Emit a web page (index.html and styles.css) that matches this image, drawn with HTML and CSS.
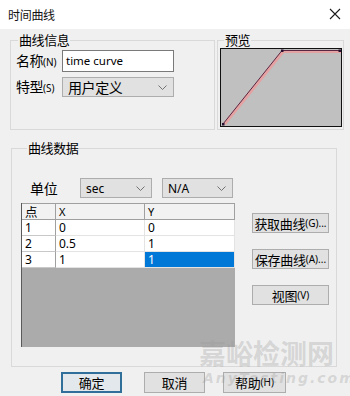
FILE: index.html
```html
<!DOCTYPE html>
<html>
<head>
<meta charset="utf-8">
<link rel="stylesheet" href="styles.css">
</head>
<body>
<div class="window">
  <div class="titlebar">
    <span class="title">时间曲线</span>
    <svg class="close" width="12" height="12" viewBox="0 0 12 12"><path d="M1 1 L11 11 M11 1 L1 11" stroke="#1a1a1a" stroke-width="1.1" fill="none"/></svg>
  </div>
  <div class="content">
    <div class="toprow">
      <fieldset class="group info">
        <legend>曲线信息</legend>
        <div class="field">
          <span class="lbl">名称<small>(N)</small></span>
          <div class="input">time curve</div>
        </div>
        <div class="field">
          <span class="lbl">特型<small>(S)</small></span>
          <div class="select wide"><span class="cjk">用户定义</span>
            <svg class="chev" width="9" height="5" viewBox="0 0 9 5"><path d="M0.5 0.5 L4.5 4.5 L8.5 0.5" stroke="#666" stroke-width="0.9" fill="none"/></svg>
          </div>
        </div>
      </fieldset>
      <fieldset class="group preview">
        <legend>预览</legend>
        <div class="canvas">
          <svg width="120" height="77" viewBox="0 0 120 77">
            <polyline points="3.5,75 62,2.5 120,2.5" stroke="#e5a2a2" stroke-width="3.2" fill="none"/>
            <polyline points="2,75 61,1.5 120,1.5" stroke="#4a1838" stroke-width="0.9" fill="none"/>
            <rect x="1" y="74" width="2.5" height="2.5" fill="#2a1030"/>
            <rect x="60" y="0.5" width="2.5" height="2.5" fill="#2a1030"/>
            <rect x="117.5" y="0.5" width="2.5" height="2.5" fill="#2a1030"/>
          </svg>
        </div>
      </fieldset>
    </div>
    <fieldset class="group data">
      <legend>曲线数据</legend>
      <div class="unitrow">
        <span class="unitlbl">单位</span>
        <div class="select sec"><span>sec</span>
          <svg class="chev" width="9" height="5" viewBox="0 0 9 5"><path d="M0.5 0.5 L4.5 4.5 L8.5 0.5" stroke="#666" stroke-width="0.9" fill="none"/></svg>
        </div>
        <div class="select na"><span>N/A</span>
          <svg class="chev" width="9" height="5" viewBox="0 0 9 5"><path d="M0.5 0.5 L4.5 4.5 L8.5 0.5" stroke="#666" stroke-width="0.9" fill="none"/></svg>
        </div>
      </div>
      <div class="datarow">
        <div class="grid">
          <div class="cell head cjk">点</div><div class="cell head">X</div><div class="cell head">Y</div>
          <div class="cell idx">1</div><div class="cell">0</div><div class="cell">0</div>
          <div class="cell idx">2</div><div class="cell">0.5</div><div class="cell">1</div>
          <div class="cell idx">3</div><div class="cell">1</div><div class="cell sel">1</div>
        </div>
        <div class="sidebtns">
          <div class="btn side">获取曲线<small>(G)...</small></div>
          <div class="btn side">保存曲线<small>(A)...</small></div>
          <div class="btn side">视图<small>(V)</small></div>
        </div>
      </div>
    </fieldset>
    <div class="bottom">
      <div class="btn ok">确定</div>
      <div class="btn cancel">取消</div>
      <div class="btn help">帮助<small>(H)</small></div>
    </div>
    <div class="watermark">
      <div class="wm1">嘉峪检测网</div>
      <div class="wm2">AnyTesting.com</div>
    </div>
  </div>
</div>
</body>
</html>
```
FILE: styles.css
```css
* { box-sizing: border-box; }
html, body { margin: 0; padding: 0; }
body {
  width: 350px;
  height: 396px;
  overflow: hidden;
  font-family: "Noto Sans CJK SC", "Noto Sans", sans-serif;
  color: #000;
  background: #f0f0f0;
}
.window { width: 350px; height: 396px; position: relative; }
.titlebar {
  height: 29px;
  background: #fff;
  display: flex;
  align-items: center;
  justify-content: space-between;
  padding: 0 9px 0 8px;
}
.title { font-size: 12px; line-height: 14px; letter-spacing: -0.3px; color: #111; }
.close { display: block; margin-top: -1px; }
.content { height: 367px; padding-top: 4px; position: relative; }
.toprow { display: flex; padding-left: 10px; }
fieldset.group {
  margin: 0;
  border: 1px solid #d9d9d9;
  min-width: 0;
}
legend {
  font-size: 13px;
  line-height: 14px;
  padding: 0 1px;
  margin-left: 3px;
  letter-spacing: -0.4px;
}
fieldset.info { width: 205px; height: 97px; padding: 3px 0 0 4px; }
fieldset.preview { width: 127px; height: 97px; margin-left: 2px; padding: 1px 0 0 2px; }
.preview legend { margin-left: 4px; }
.field { display: flex; align-items: center; margin-bottom: 5px; }
.lbl { width: 47px; padding-left: 1px; font-size: 14px; line-height: 16px; letter-spacing: -0.5px; }
small { font-family: "Noto Sans", sans-serif; font-size: 10px; letter-spacing: 0; }
.input {
  width: 112px; height: 22px;
  background: #fff;
  border: 1px solid #7a7a7a;
  font-family: "Noto Sans", sans-serif;
  font-size: 11.5px;
  line-height: 20px;
  padding-left: 3px;
}
.select {
  height: 20px;
  background: #e1e1e1;
  border: 1px solid #adadad;
  display: flex;
  align-items: center;
  justify-content: space-between;
  padding: 0 6px 0 5px;
  font-family: "Noto Sans", sans-serif;
  font-size: 12px;
}
.select .cjk { font-family: "Noto Sans CJK SC", sans-serif; font-size: 14px; letter-spacing: -0.4px; line-height: 16px; }
.wide { width: 112px; }
.chev { display: block; }
.canvas {
  width: 122px; height: 79px;
  border: 1px solid #111;
  background: #c0c0c0;
}
.canvas svg { display: block; }
fieldset.data {
  width: 326px;
  height: 226px;
  margin: 11px 0 0 11px;
  padding: 23px 0 0 9px;
}
.data legend { margin-left: 6px; }
.unitrow { display: flex; align-items: center; height: 20px; }
.unitlbl { width: 59px; padding-left: 9px; font-size: 14px; line-height: 16px; letter-spacing: -0.3px; }
.sec { width: 72px; }
.na { width: 71px; margin-left: 10px; }
.datarow { display: flex; margin-top: 5px; }
.grid {
  width: 214px;
  height: 144px;
  background: #ababab;
  border-left: 1px solid #5a5a5a;
  display: grid;
  grid-template-columns: 34px 89px 90px;
  grid-template-rows: 17px 16px 16px 16px;
  align-content: start;
}
.cell {
  background: #fff;
  border-right: 1px solid #e3e3e3;
  border-bottom: 1px solid #e3e3e3;
  font-family: "Noto Sans", sans-serif;
  font-size: 12px;
  line-height: 15px;
  padding-left: 3px;
  overflow: hidden;
}
.cell.head {
  background: #f2f2f2;
  border-top: 1px solid #a0a0a0;
  border-right: 1px solid #a0a0a0;
  border-bottom: 1px solid #a0a0a0;
  line-height: 15px;
  font-size: 11px;
}
.cell.head.cjk { font-family: "Noto Sans CJK SC", sans-serif; font-size: 12.5px; line-height: 15px; }
.cell.idx { border-right: 1px solid #a0a0a0; border-bottom: 1px solid #c8c8c8; }
.cell.sel { background: #0078d7; color: #fff; }
.sidebtns {
  display: flex;
  flex-direction: column;
  gap: 16px;
  margin-left: 17px;
  padding-top: 10px;
}
.btn {
  height: 21px;
  background: #e1e1e1;
  border: 1px solid #adadad;
  display: flex;
  align-items: center;
  justify-content: center;
  font-size: 13px;
  line-height: 15px;
  letter-spacing: -0.3px;
}
.side { width: 77px; height: 20px; }
.bottom { display: flex; margin-top: 5px; }
.ok {
  width: 61px; margin-left: 61px;
  border: 2px solid #2f6f99;
  background: #e3e8ec;
}
.cancel { width: 61px; margin-left: 22px; }
.help { width: 63px; margin-left: 18px; }
.watermark {
  position: absolute;
  left: 199px;
  top: 309px;
  pointer-events: none;
  color: rgba(150, 150, 150, 0.3);
}
.wm1 {
  font-size: 27px;
  font-weight: bold;
  line-height: 30px;
}
.wm2 {
  font-family: "DejaVu Sans", sans-serif;
  font-style: italic;
  font-weight: bold;
  font-size: 14px;
  line-height: 16px;
  letter-spacing: 2px;
  margin-left: 4px;
  margin-top: 2px;
}
```
